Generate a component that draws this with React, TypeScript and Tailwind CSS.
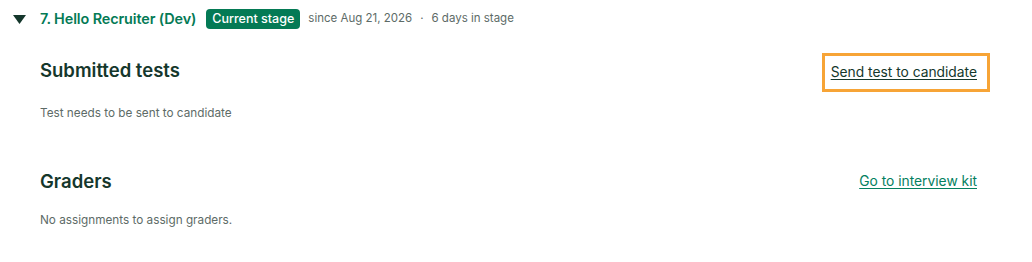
import React from "react";

export default function App() {
  return (
    <div className="w-[1032px] h-[262px] bg-white font-['Inter',sans-serif] text-[#15372c]">
      {/* Stage header */}
      <div className="flex items-center h-[38px] pl-[13px]">
        <svg width="13" height="9" viewBox="0 0 13 9" className="mr-[14px]">
          <path d="M0 0 H13 L6.5 9 Z" fill="#15372c" />
        </svg>
        <span className="text-[14.4px] font-semibold text-[#047a55] tracking-[-0.1px]">7. Hello Recruiter (Dev)</span>
        <span className="ml-[10px] bg-[#047a55] text-white text-[12.5px] font-medium rounded-[4px] h-[20px] px-[6px] flex items-center">Current stage</span>
        <span className="ml-[8px] text-[11.5px] text-[#5d6b67]">since Aug 21, 2026</span>
        <span className="mx-[8px] text-[11.5px] text-[#5d6b67]">·</span>
        <span className="text-[11.5px] text-[#5d6b67]">6 days in stage</span>
      </div>

      <div className="pl-[40px] pr-[55px]">
        {/* Submitted tests */}
        <div className="flex items-center justify-between mt-[15px] h-[39px]">
          <h2 className="text-[18.5px] font-semibold -mt-[3px]">Submitted tests</h2>
          <div className="border-[3px] border-[#f7a436] h-[39px] flex items-center pl-[6px] pr-[10px] -mr-[13px]">
            <a className="text-[13.8px] underline underline-offset-2 text-[#15372c]">Send test to candidate</a>
          </div>
        </div>
        <p className="text-[11.75px] text-[#5d6b67] mt-[13px]">Test needs to be sent to candidate</p>

        {/* Graders */}
        <div className="flex items-center justify-between mt-[45px]">
          <h2 className="text-[18.5px] font-semibold">Graders</h2>
          <a className="text-[13.8px] underline underline-offset-2 text-[#048060]">Go to interview kit</a>
        </div>
        <p className="text-[11.75px] text-[#5d6b67] mt-[17px]">No assignments to assign graders.</p>
      </div>
    </div>
  );
}
